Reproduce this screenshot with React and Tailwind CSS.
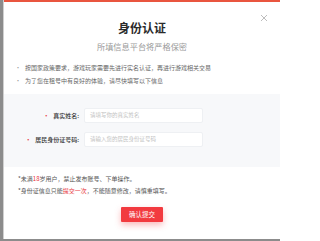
import React from "react";

const font = { fontFamily: '"Noto Sans CJK SC", "Noto Sans", sans-serif' };

function Row({ label, placeholder }) {
  return (
    <div className="flex items-center h-[15px]">
      <div className="w-[80px] flex items-center justify-end pr-[5px] text-[6px] text-[#333] font-medium leading-none">
        <span className="text-[#e8363d] mr-[4px] text-[6px]">•</span>
        <span>{label}</span>
      </div>
      <div className="w-[119px] h-[15px] bg-white border border-[#eef0f3] rounded-[2px] flex items-center pl-[5px] text-[5.5px] text-[#c2c2c2] leading-none">
        {placeholder}
      </div>
    </div>
  );
}

export default function App() {
  return (
    <div className="w-[280px] h-[241px] bg-[#8c8c8c] flex overflow-hidden" style={font}>
      <div className="ml-[3px] w-[277px] h-[239px] bg-white relative flex flex-col border-l border-[#d0d0d0]">
        <div className="h-[2px] bg-[#e9553f] w-full" />
        <div className="absolute right-[12px] top-[14px] text-[#b5b5b5]">
          <svg width="8" height="8" viewBox="0 0 8 8">
            <path d="M1 1L7 7M7 1L1 7" stroke="currentColor" strokeWidth="0.9" />
          </svg>
        </div>
        <div className="mt-[20px] text-center text-[12px] leading-[12px] font-bold text-[#2b2b2b]">
          身份认证
        </div>
        <div className="mt-[7px] text-center text-[8.2px] leading-[10px] text-[#9a9a9a]">
          所填信息平台将严格保密
        </div>
        <ul className="mt-[10px] pl-[11px] text-[6px] leading-[13px] text-[#666]">
          <li className="flex">
            <span className="w-[10px] text-[#999]">·</span>
            <span>按国家政策要求，游戏玩家需要先进行实名认证，再进行游戏相关交易</span>
          </li>
          <li className="flex">
            <span className="w-[10px] text-[#999]">·</span>
            <span>为了您在租号中有良好的体验，请尽快填写以下信息</span>
          </li>
        </ul>
        <div className="mt-[7px] h-[73px] bg-[#f7f8fa] pt-[14px] flex flex-col gap-[9px] pl-[0px]">
          <Row label="真实姓名:" placeholder="请填写你的真实姓名" />
          <Row label="居民身份证号码:" placeholder="请输入您的居民身份证号码" />
        </div>
        <div className="mt-[6px] pl-[14px] text-[6px] leading-[12px] text-[#555]">
          <div>
            *未满<span className="text-[#e8363d]">18</span>岁用户，禁止发布账号、下单操作。
          </div>
          <div>
            *身份证信息只能<span className="text-[#e8363d]">提交一次</span>，不能随意修改，请慎重填写。
          </div>
        </div>
        <div className="mt-[10px] flex justify-center">
          <button className="w-[42px] h-[15px] bg-[#f23a3f] text-white text-[6.5px] leading-none rounded-[1px] shadow-[0_3px_6px_rgba(242,58,63,0.35)]">
            确认提交
          </button>
        </div>
      </div>
    </div>
  );
}
